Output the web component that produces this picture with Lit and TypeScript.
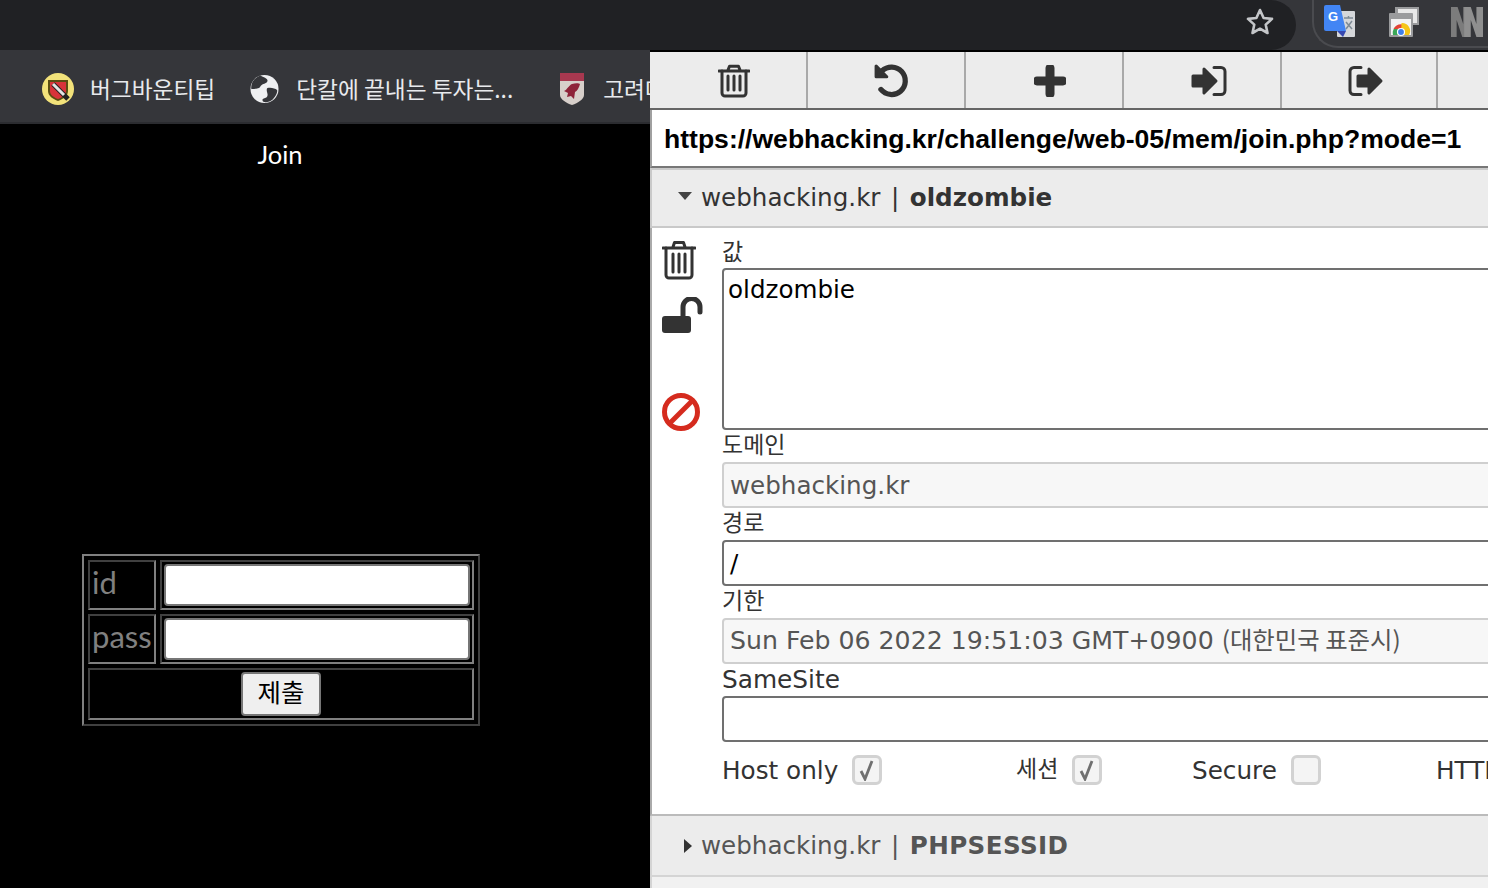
import { LitElement, html, css, svg } from "lit";
import { customElement } from "lit/decorators.js";

const trash = svg`<path d="M1 7H31M10 6l1.5-3.8h9L22 6" /><path d="M4 7V29a3 3 0 0 0 3 3H25a3 3 0 0 0 3-3V7" /><path d="M10 12V26M16 12V26M22 12V26" />`;
const check = svg`<svg width="18" height="22" viewBox="0 0 18 22"><path d="M3 12l4 8L14 2"/></svg>`;

@customElement("app-root")
export class AppRoot extends LitElement {
  static styles = css`
    :host { display: block; width: 1488px; height: 888px; overflow: hidden; background: #000; font-family: "DejaVu Sans", sans-serif; }
    * { box-sizing: border-box; }
    .chrome { height: 50px; display: flex; background: #35363a; }
    .omni { flex: 1; background: #202124; border-radius: 0 26px 26px 0; display: flex; justify-content: flex-end; align-items: center; padding: 0 21px 6px 0; }
    .ext { width: 176px; margin-left: 16px; height: 48px; border: 2px solid #4a4b4f; border-right: 0; border-top: 0; border-radius: 0 0 0 26px; display: flex; align-items: center; gap: 32px; padding: 0 0 2px 9px; }
    .ext svg { flex: none; }
    .main { display: flex; height: 838px; }
    .left { width: 650px; flex: none; display: flex; flex-direction: column; overflow: hidden; }
    .bookmarks { height: 74px; flex: none; background: #35363a; border-bottom: 2px solid #2b2c30; display: flex; align-items: center; padding: 6px 0 0 42px; white-space: nowrap; font-family: "Noto Sans CJK KR", sans-serif; font-size: 22.700px; color: #e8eaed; }
    .bm { display: flex; align-items: center; gap: 16px; margin-right: 36px; flex: none; }
    .bm span { padding-bottom: 2px; }
    .bm.globe { margin-right: 35px; margin-left: -1px; gap: 17px; }
    .bm.uni { gap: 18px; margin-left: 11px; }
    .page { flex: 1; background: #000; padding-right: 88px; display: flex; flex-direction: column; align-items: center; }
    .join { font-family: "Lato", sans-serif; color: #fff; font-size: 25.500px; line-height: 32px; margin: 14px 2px 0 0; }
    table { margin-top: 384px; width: 398px; height: 172px; flex: none; border-collapse: separate; border-spacing: 4px; border: 2px solid; border-color: #808080 #404040 #404040 #808080; font-family: "Lato", sans-serif; color: #808080; font-size: 31px; table-layout: fixed; }
    td { border: 2px solid; border-color: #404040 #808080 #808080 #404040; padding: 0 0 0 2px; line-height: 40px; vertical-align: top; }
    td.name { width: 68px; height: 50px; }
    td.val { padding: 2px; }
    td.act { padding: 2px; }
    .inp { display: block; width: 306px; height: 42px; background: #fff; border: 2px solid #767676; border-radius: 4px; }
    button { display: block; margin: 0 auto; width: 80px; height: 44px; background: #efefef; border: 2px solid #767676; border-radius: 4px; font-family: "Noto Sans CJK KR", sans-serif; font-size: 25.500px; line-height: 34px; color: #000; padding: 0 0 6px; }
    .panel { width: 838px; flex: none; margin-top: 2px; background: #fff; overflow: hidden; display: flex; flex-direction: column; }
    .tools { height: 58px; flex: none; display: flex; background: #ececec; border-bottom: 2px solid #666; }
    .tool { width: 158px; flex: none; border-right: 2px solid #a9a9a9; display: flex; align-items: center; justify-content: center; padding: 2px 0 0 12px; }
    .tool:nth-child(4) { padding-left: 14px; }
    .tool:nth-child(5) { width: 156px; padding-left: 14px; }
    .tool svg, .side svg { fill: none; stroke: #333; stroke-width: 3; stroke-linecap: round; stroke-linejoin: round; display: block; }
    .url { height: 58px; flex: none; border-left: 2px solid #a0a0a0; border-bottom: 2px solid #777; padding-left: 12px; font-family: "Liberation Sans", sans-serif; font-weight: 700; font-size: 26.550px; line-height: 58px; color: #000; white-space: nowrap; background: #fff; }
    .cookie { flex: none; height: 60px; background: #ececec; border-top: 2px solid #c9c9c9; border-bottom: 2px solid #c9c9c9; border-left: 2px solid #c9c9c9; display: flex; align-items: center; font-size: 24.600px; color: #333; white-space: nowrap; padding-bottom: 2px; }
    .cookie b { font-weight: 700; }
    .tri { width: 49px; flex: none; display: flex; }
    .tri.down { padding-left: 26px; padding-bottom: 2px; }
    .tri.right { padding-left: 32px; }
    .sep { margin: 0 10.500px; }
    .body { height: 588px; flex: none; border-left: 2px solid #aaa; border-bottom: 2px solid #bbb; display: flex; padding-top: 10px; }
    .side { width: 70px; flex: none; padding: 2px 0 0 10px; display: flex; flex-direction: column; }
    .side .unlock { margin-top: 17px; }
    .side .block { margin-top: 60px; }
    .form { width: 900px; flex: none; display: flex; flex-direction: column; }
    .form > * { flex: none; }
    .lbl { height: 32px; font-family: "DejaVu Sans", "Noto Sans CJK KR", sans-serif; font-size: 24.800px; line-height: 32px; color: #333; white-space: nowrap; }
    .lbl.ko { font-family: "Noto Sans CJK KR", sans-serif; font-size: 23px; line-height: 27px; }
    .lbl.first { height: 30px; line-height: 24px; }
    .field { height: 46px; border: 2px solid #707070; border-radius: 4px; background: #fff; color: #000; font-size: 24.600px; line-height: 44px; padding-left: 6px; white-space: nowrap; }
    .field.dis { background: #f7f7f7; border-color: #cfcfcf; color: #555; }
    .field.date { font-size: 25.200px; line-height: 38px; }
    .area { height: 162px; line-height: 40px; padding-left: 4px; }
    .field .ko { font-family: "Noto Sans CJK KR", sans-serif; font-size: 24.400px; }
    .flags { display: grid; grid-template-columns: 294px 176px 244px 200px; align-items: center; height: 72px; padding-bottom: 16px; font-size: 24.700px; color: #333; white-space: nowrap; }
    .flag { display: flex; align-items: center; gap: 14px; }
    .flag .ko { font-family: "Noto Sans CJK KR", sans-serif; font-size: 23px; padding-bottom: 6px; }
    .cb { width: 30px; height: 30px; border: 3px solid #d2d2d2; border-radius: 6px; background: #f4f4f4; display: flex; align-items: center; justify-content: center; }
    .cb svg { fill: none; stroke: #707070; stroke-width: 2.800; }
    .second { color: #555; height: 61px; padding-bottom: 0; border-top: 0; background: #ececec; border-bottom-color: #d4d4d4; border-left-color: #d4d4d4; }
    .second b { letter-spacing: 0.400px; }
    .rest { flex: 1; background: #f1f1f1; border-left: 2px solid #d4d4d4; }
  `;

  render() {
    return html`
      <div class="chrome">
        <div class="omni">
          <svg width="30" height="30" viewBox="0 0 30 30" fill="none" stroke="#c4c6c9" stroke-width="2.6" stroke-linejoin="round"><path d="M15 3l3.6 8 8.4.9-6.3 5.7 1.8 8.4L15 21.7 7.500 26l1.800-8.400L3 11.900l8.400-.9z"/></svg>
        </div>
        <div class="ext">
          <svg width="34" height="34" viewBox="0 0 34 34">
            <rect x="14" y="6" width="18" height="26" rx="1" fill="#d5d7da"/>
            <path d="M21 13h9M25.500 11v2M23 24l6-8M23 17l6 7" stroke="#7d8a95" stroke-width="1.500" fill="none"/>
            <path d="M1 2a2 2 0 0 1 2-2h14l6 26H3a2 2 0 0 1-2-2z" fill="#4285f4"/>
            <path d="M14 26h9l-3 6z" fill="#3748b0"/>
            <text x="5" y="16" font-family="Liberation Sans" font-weight="700" font-size="13" fill="#fff">G</text>
          </svg>
          <svg width="30" height="30" viewBox="0 0 30 30">
            <rect x="6" y="0" width="24" height="18" fill="#9a9b9d"/>
            <rect x="9" y="2" width="19" height="14" fill="#e8e8e8"/>
            <rect x="0" y="6" width="24" height="24" rx="1" fill="#9a9b9d"/>
            <rect x="2" y="12" width="20" height="16" fill="#f2f2f2"/>
            <path d="M4 28a8 8 0 0 1 8-10v10z" fill="#3aa757"/>
            <path d="M4.500 22a8.500 9 0 0 1 15 0h-7z" fill="#e24234"/>
            <path d="M12.500 16a8 8 0 0 1 7.500 12h-8z" fill="#f5c518"/>
            <circle cx="12" cy="25" r="3.500" fill="#3f7ee8" stroke="#fff" stroke-width="1.200"/>
          </svg>
          <svg width="32" height="32" viewBox="0 0 34 32">
            <path d="M0 0h7l6 18V0h6v32h-7L6 14v18H0z" fill="#7c7c7c"/>
            <path d="M14 0h7l6 18V0h7v32h-7l-6-18v18h-7z" fill="#8f8f8f"/>
          </svg>
        </div>
      </div>
      <div class="main">
        <div class="left">
          <div class="bookmarks">
            <div class="bm">
              <svg width="32" height="32" viewBox="0 0 32 32">
                <ellipse cx="16" cy="16" rx="16" ry="16" fill="#f2e27a"/>
                <path d="M6 7h20v11c0 5-5 8-10 10-5-2-10-5-10-10z" fill="#5a4d12"/>
                <path d="M8 9h16v9c0 4-4 6.500-8 8-4-1.500-8-4-8-8z" fill="#d8333a"/>
                <path d="M11 11l15 15" stroke="#222" stroke-width="5"/><path d="M11 11l11 11" stroke="#e4e4e4" stroke-width="3"/>
              </svg>
              <span>버그바운티팁</span>
            </div>
            <div class="bm globe">
              <svg width="29" height="30" viewBox="0 0 30 30">
                <circle cx="15" cy="15" r="14.500" fill="#eff0f2"/>
                <path d="M11 1c3 2 8 3 7 6-1 3-5 2-7 5-1 3-6 3-9 3-1 1-1-3 0-6 2-4 5-7 9-8zM18 14c3-1 8 0 10 2 1 3-3 10-8 12-3 1-7 1-7-1-1-3 5-2 5-5 1-2-2-6 0-8z" fill="#35363a"/>
              </svg>
              <span>단칼에 끝내는 투자는...</span>
            </div>
            <div class="bm uni">
              <svg width="26" height="32" viewBox="0 0 26 32">
                <path d="M1 0h24v22c0 4-6 8-12 10C7 30 1 26 1 22z" fill="#d7cfca"/>
                <rect x="1" y="0" width="24" height="8" fill="#a7384f"/>
                <path d="M5 18c3-1 5-6 8-7 3-1 7-1 8 0-1 4-3 7-5 8l-1 7-3-3-4 1 1-4z" fill="#8e2339"/>
              </svg>
              <span>고려대학교</span>
            </div>
          </div>
          <div class="page">
            <div class="join">Join</div>
            <table>
              <tr><td class="name">id</td><td class="val"><span class="inp"></span></td></tr>
              <tr><td class="name">pass</td><td class="val"><span class="inp"></span></td></tr>
              <tr><td class="act" colspan="2"><button>제출</button></td></tr>
            </table>
          </div>
        </div>
        <div class="panel">
          <div class="tools">
            <div class="tool"><svg width="32" height="34" viewBox="0 0 32 34">${trash}</svg></div>
            <div class="tool"><svg width="38" height="38" viewBox="0 0 36 36"><path d="M8.500 8.500A13 13 0 1 1 7.500 26" stroke-width="5"/><path d="M3 4v10h10z" fill="#333"/></svg></div>
            <div class="tool"><svg width="32" height="32" viewBox="0 0 32 32"><path d="M16 3V29M3 16H29" stroke-width="9" stroke-linecap="round"/></svg></div>
            <div class="tool"><svg width="36" height="30" viewBox="0 0 36 30"><path d="M2 10H13V3L25 15 13 27V20H2z" fill="#333" stroke-width="3"/><path d="M23 1.500h7a4 4 0 0 1 4 4v19a4 4 0 0 1-4 4h-7"/></svg></div>
            <div class="tool"><svg width="36" height="30" viewBox="0 0 36 30"><path d="M10 10H21V3L33 15 21 27V20H10z" fill="#333" stroke-width="3"/><path d="M13 1.500H6a4 4 0 0 0-4 4v19a4 4 0 0 0 4 4h7"/></svg></div>
            <div class="tool"></div>
          </div>
          <div class="url">https://webhacking.kr/challenge/web-05/mem/join.php?mode=1</div>
          <div class="cookie">
            <span class="tri down"><svg width="14" height="8" viewBox="0 0 14 8"><path d="M0 0H14L7 8z" fill="#444"/></svg></span>
            <span>webhacking.kr</span><span class="sep">|</span><b>oldzombie</b>
          </div>
          <div class="body">
            <div class="side">
              <svg width="34" height="40" viewBox="0 0 34 40"><path d="M1 8H33M11 7l1.500-4.500h9L23 7" /><path d="M4 8V35a3 3 0 0 0 3 3H27a3 3 0 0 0 3-3V8" /><path d="M11 14V32M17 14V32M23 14V32" /></svg>
              <svg class="unlock" width="42" height="36" viewBox="0 0 42 36"><rect x="0" y="19" width="29" height="17" rx="3" fill="#333" stroke="none"/><path d="M21 19V10a8.500 8.500 0 0 1 17 0V15" stroke-width="5"/></svg>
              <svg class="block" width="38" height="38" viewBox="0 0 38 38"><circle cx="19" cy="19" r="16.500" style="stroke:#d52b1e;stroke-width:5"/><path d="M8 30L30 8" style="stroke:#d52b1e;stroke-width:5;stroke-linecap:butt"/></svg>
            </div>
            <div class="form">
              <div class="lbl ko first">값</div>
              <div class="field area">oldzombie</div>
              <div class="lbl ko">도메인</div>
              <div class="field dis">webhacking.kr</div>
              <div class="lbl ko">경로</div>
              <div class="field">/</div>
              <div class="lbl ko">기한</div>
              <div class="field dis date">Sun Feb 06 2022 19:51:03 GMT+0900 <span class="ko">(대한민국 표준시)</span></div>
              <div class="lbl">SameSite</div>
              <div class="field"></div>
              <div class="flags">
                <div class="flag">Host only <span class="cb">${check}</span></div>
                <div class="flag"><span class="ko">세션</span> <span class="cb">${check}</span></div>
                <div class="flag">Secure <span class="cb"></span></div>
                <div class="flag">HTTP only</div>
              </div>
            </div>
          </div>
          <div class="cookie second">
            <span class="tri right"><svg width="8" height="14" viewBox="0 0 8 14"><path d="M0 0L8 7 0 14z" fill="#333"/></svg></span>
            <span>webhacking.kr</span><span class="sep">|</span><b>PHPSESSID</b>
          </div>
          <div class="rest"></div>
        </div>
      </div>
    `;
  }
}
